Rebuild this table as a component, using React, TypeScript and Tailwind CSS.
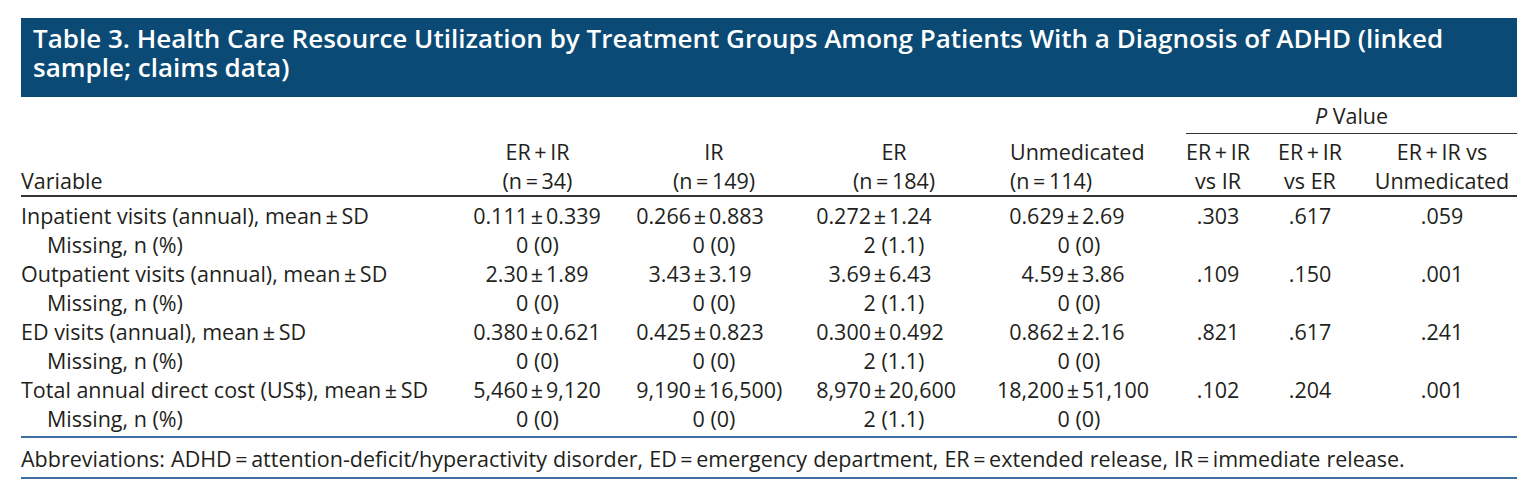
import React from "react";

const T = "\u2009";
const GRID = "grid grid-cols-[439px_155px_198px_162px_208px_70px_114px_150px]";

// width of the part left of the ± sign, per group column
const LEFT_W = ["w-[68px]", "w-[76px]", "w-[58px]", "w-[89px]"];

type MeanRow = {
  label: string;
  means: [string, string][];
  p: string[];
  missing: string[];
};

const rows: MeanRow[] = [
  {
    label: `Inpatient visits (annual), mean${T}±${T}SD`,
    means: [
      ["0.111", "0.339"],
      ["0.266", "0.883"],
      ["0.272", "1.24"],
      ["0.629", "2.69"],
    ],
    p: [".303", ".617", ".059"],
    missing: ["0 (0)", "0 (0)", "2 (1.1)", "0 (0)"],
  },
  {
    label: `Outpatient visits (annual), mean${T}±${T}SD`,
    means: [
      ["2.30", "1.89"],
      ["3.43", "3.19"],
      ["3.69", "6.43"],
      ["4.59", "3.86"],
    ],
    p: [".109", ".150", ".001"],
    missing: ["0 (0)", "0 (0)", "2 (1.1)", "0 (0)"],
  },
  {
    label: `ED visits (annual), mean${T}±${T}SD`,
    means: [
      ["0.380", "0.621"],
      ["0.425", "0.823"],
      ["0.300", "0.492"],
      ["0.862", "2.16"],
    ],
    p: [".821", ".617", ".241"],
    missing: ["0 (0)", "0 (0)", "2 (1.1)", "0 (0)"],
  },
  {
    label: `Total annual direct cost (US$), mean${T}±${T}SD`,
    means: [
      ["5,460", "9,120"],
      ["9,190", "16,500)"],
      ["8,970", "20,600"],
      ["18,200", "51,100"],
    ],
    p: [".102", ".204", ".001"],
    missing: ["0 (0)", "0 (0)", "2 (1.1)", "0 (0)"],
  },
];

function MeanCell({ idx, v }: { idx: number; v: [string, string] }) {
  return (
    <div className="flex whitespace-nowrap">
      <span className={`${LEFT_W[idx]} shrink-0 text-right`}>{v[0]}</span>
      <span className="w-[18px] shrink-0 text-center">±</span>
      <span>{v[1]}</span>
    </div>
  );
}

export default function App() {
  return (
    <div
      className="w-[1536px] h-[494px] bg-white pt-[18px] pl-[21px] text-[#231f20]"
      style={{ fontFamily: '"Open Sans", "Noto Sans", sans-serif' }}
    >
      <div className="w-[1496px]">
        <div className="bg-[#0a4a74] text-white font-semibold text-[26px] leading-[29px] pl-[12px] pr-[40px] pt-[6px] pb-[15px]">
          Table 3. Health Care Resource Utilization by Treatment Groups Among Patients With a Diagnosis of ADHD (linked
          sample; claims data)
        </div>

        <div className="text-[21.5px] leading-[29px]">
          {/* column heads */}
          <div className={`${GRID} pt-[4px] border-b-2 border-[#333]`}>
            <div className="row-span-2 self-end">Variable</div>
            <div className="row-span-2 self-end text-center">
              ER{T}+{T}IR
              <br />
              (n{T}={T}34)
            </div>
            <div className="row-span-2 self-end text-center">
              IR
              <br />
              (n{T}={T}149)
            </div>
            <div className="row-span-2 self-end text-center">
              ER
              <br />
              (n{T}={T}184)
            </div>
            <div className="row-span-2 self-end pl-[35px]">
              Unmedicated
              <br />
              (n{T}={T}114)
            </div>
            <div className="col-span-3 ml-[3px] text-center border-b-[1.5px] border-[#333] pb-[3px] mb-[3px]">
              <span className="italic">P</span> Value
            </div>
            <div className="text-center">
              ER{T}+{T}IR
              <br />
              vs IR
            </div>
            <div className="text-center">
              ER{T}+{T}IR
              <br />
              vs ER
            </div>
            <div className="text-center">
              ER{T}+{T}IR vs
              <br />
              Unmedicated
            </div>
          </div>

          {/* body */}
          <div className="pt-[4px] pb-[3px] border-b-2 border-[#3f6ea3]">
            {rows.map((r) => (
              <React.Fragment key={r.label}>
                <div className={GRID}>
                  <div className="whitespace-nowrap">{r.label}</div>
                  {r.means.map((m, i) => (
                    <MeanCell key={i} idx={i} v={m} />
                  ))}
                  {r.p.map((p, i) => (
                    <div key={i} className="text-center">
                      {p}
                    </div>
                  ))}
                </div>
                <div className={GRID}>
                  <div className="pl-[26px]">Missing, n (%)</div>
                  {r.missing.map((m, i) => (
                    <div key={i} className="text-center">
                      {m}
                    </div>
                  ))}
                  <div />
                  <div />
                  <div />
                </div>
              </React.Fragment>
            ))}
          </div>

          <div className="pt-[6px] pb-[4px] border-b-2 border-[#3f6ea3] whitespace-nowrap [word-spacing:0.5px]">
            Abbreviations: ADHD{T}={T}attention-deficit/hyperactivity disorder, ED{T}={T}emergency department,
            ER{T}={T}extended release, IR{T}={T}immediate release.
          </div>
        </div>
      </div>
    </div>
  );
}
